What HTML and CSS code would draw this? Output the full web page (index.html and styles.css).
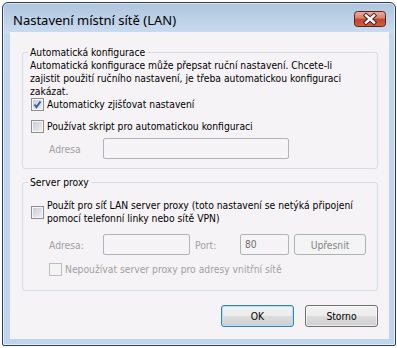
FILE: index.html
```html
<!DOCTYPE html>
<html lang="cs">
<head>
    <meta charset="UTF-8">
    <title>Nastavení místní sítě (LAN)</title>
    <link rel="stylesheet" href="styles.css">
</head>
<body>
    <div class="window">
        <div class="titlebar">
            <span class="title">Nastavení místní sítě (LAN)</span>
            <div class="close-btn">
                <svg width="32" height="16" viewBox="0 0 32 16">
                    <defs>
                        <linearGradient id="closeFill" x1="0" y1="0" x2="0" y2="1">
                            <stop offset="0" stop-color="#eab0a4"/>
                            <stop offset="0.45" stop-color="#d6806d"/>
                            <stop offset="0.5" stop-color="#c2452d"/>
                            <stop offset="1" stop-color="#cf5d43"/>
                        </linearGradient>
                    </defs>
                    <rect x="0.5" y="0.5" width="31" height="15" rx="3" fill="url(#closeFill)" stroke="#5e2219"/>
                    <path d="M12 4.5 L20 11.5 M20 4.5 L12 11.5" stroke="#4b1d17" stroke-width="4.4" stroke-linecap="square"/>
                    <path d="M12 4.5 L20 11.5 M20 4.5 L12 11.5" stroke="#ffffff" stroke-width="2.4" stroke-linecap="square"/>
                </svg>
            </div>
        </div>

        <div class="client">
            <fieldset class="group group-auto">
                <legend>Automatická konfigurace</legend>
                <p class="desc">Automatická konfigurace může přepsat ruční nastavení. Chcete-li<br>zajistit použití ručního nastavení, je třeba automatickou konfiguraci<br>zakázat.</p>
                <label class="check-row first">
                    <span class="checkbox">
                        <svg width="11" height="11" viewBox="0 0 11 11"><path d="M2.5 5.5 L4.5 8 L8.5 2.5" fill="none" stroke="#3a5ea6" stroke-width="2"/></svg>
                    </span>
                    Automaticky zjišťovat nastavení
                </label>
                <label class="check-row second">
                    <span class="checkbox"></span>
                    Používat skript pro automatickou konfiguraci
                </label>
                <div class="field-row script-row">
                    <span class="field-label disabled script-label">Adresa</span>
                    <span class="edit edit-script"></span>
                </div>
            </fieldset>

            <fieldset class="group group-proxy">
                <legend>Server proxy</legend>
                <label class="check-row multi">
                    <span class="checkbox"></span>
                    <span>Použít pro síť LAN server proxy (toto nastavení se netýká připojení<br>pomocí telefonní linky nebo sítě VPN)</span>
                </label>
                <div class="field-row proxy-row">
                    <span class="field-label disabled address-label">Adresa:</span>
                    <span class="edit edit-address"></span>
                    <span class="field-label disabled port-label">Port:</span>
                    <span class="edit edit-port">80</span>
                    <button class="btn btn-disabled">Upřesnit</button>
                </div>
                <label class="check-row bypass disabled">
                    <span class="checkbox checkbox-disabled"></span>
                    Nepoužívat server proxy pro adresy vnitřní sítě
                </label>
            </fieldset>

            <div class="dialog-buttons">
                <button class="btn btn-default">OK</button>
                <button class="btn">Storno</button>
            </div>
        </div>
    </div>
</body>
</html>
```

FILE: styles.css
```css
body {
    margin: 0;
    background-color: #ffffff;
    font-family: "DejaVu Sans Condensed", "DejaVu Sans", sans-serif;
    font-stretch: condensed;
    font-size: 10.25px;
    color: #000000;
}

.window {
    box-sizing: border-box;
    width: 394px;
    height: 344px;
    margin: 2px 0 0 2px;
    padding: 0 6px 6px 7px;
    border: 1px solid #2f3f50;
    border-radius: 6px 6px 2px 2px;
    background: linear-gradient(to bottom, #afc5de 0, #c9dbef 30px, #c2d6ee 31px, #bfd4ed 100%);
    box-shadow: inset 0 0 0 1px rgba(255, 255, 255, 0.55);
}

.titlebar {
    display: flex;
    align-items: flex-start;
    height: 29px;
}

.title {
    margin: 10px 0 0 3px;
    font-family: "Noto Sans", "Open Sans", sans-serif;
    font-stretch: normal;
    font-size: 13px;
    line-height: 15px;
}

.close-btn {
    margin: 8px 3px 0 auto;
    width: 32px;
    height: 16px;
}
.close-btn svg {
    display: block;
}

.client {
    box-sizing: border-box;
    height: 307px;
    padding: 0 11px 0 12px;
    background-color: #f6f3f6;
    overflow: hidden;
    white-space: nowrap;
}

.group {
    margin: 0;
    padding: 0 6px 0 7px;
    min-width: 0;
    border: 1px solid #d5dde3;
    border-radius: 3px;
}
.group legend {
    margin-left: -2px;
    padding: 0 2px;
    line-height: 13px;
}
.group-auto {
    margin-top: 14px;
    padding-bottom: 9px;
}
.group-proxy {
    margin-top: 7px;
    padding-bottom: 14px;
}

.desc {
    margin: 0;
    line-height: 13px;
}

.check-row {
    display: flex;
    align-items: center;
    line-height: 13px;
}
.check-row .checkbox {
    margin: 0 3px 0 1px;
}
.check-row.second {
    margin-top: 9px;
}
.check-row.multi {
    margin-top: 10px;
}
.check-row.bypass {
    margin: 8px 0 0 19px;
}
.check-row.bypass .checkbox {
    margin-left: 0;
}

.checkbox {
    box-sizing: border-box;
    flex: none;
    width: 13px;
    height: 13px;
    border: 1px solid #8e8f8f;
    background: linear-gradient(135deg, #c6cad0, #f2f2f3);
    box-shadow: inset 0 0 0 1px #f7f7f7;
}
.checkbox svg {
    display: block;
    margin: 0;
}
.checkbox-disabled {
    border-color: #bdbdbd;
    background: #f4f4f4;
    box-shadow: none;
}

.disabled {
    color: #a0a0a0;
}

.field-row {
    display: flex;
    align-items: center;
    height: 21px;
}
.script-row {
    margin-top: 5px;
}
.proxy-row {
    margin-top: 9px;
}

.field-label {
    flex: none;
}
.script-label,
.address-label {
    width: 54px;
    margin-left: 19px;
}
.port-label {
    width: 45px;
    margin-left: 5px;
}

.edit {
    box-sizing: border-box;
    height: 21px;
    border: 1px solid #b2b4b8;
    border-radius: 2px;
    line-height: 19px;
    padding-left: 4px;
    color: #6d6d6d;
}
.edit-script {
    width: 186px;
}
.edit-address {
    width: 87px;
}
.edit-port {
    width: 49px;
}

.btn {
    box-sizing: border-box;
    height: 22px;
    padding: 0;
    border: 1px solid #707070;
    border-radius: 3px;
    background: linear-gradient(to bottom, #f2f2f2 0%, #ebebeb 50%, #dddddd 51%, #cfcfcf 100%);
    box-shadow: inset 0 0 0 1px rgba(255, 255, 255, 0.6);
    font-family: "DejaVu Sans Condensed", "DejaVu Sans", sans-serif;
    font-stretch: condensed;
    font-weight: normal;
    font-size: 10.25px;
    color: #000000;
}
.btn-disabled {
    width: 72px;
    height: 21px;
    margin-left: 5px;
    border-color: #adb2b5;
    background: #f4f4f4;
    box-shadow: none;
    color: #838383;
}
.btn-default {
    border-color: #3c7fb1;
    box-shadow: inset 0 0 0 1px #a8e2fb;
}

.dialog-buttons {
    display: flex;
    justify-content: flex-end;
    gap: 11px;
    margin-top: 14px;
}
.dialog-buttons .btn {
    width: 73px;
}
```
